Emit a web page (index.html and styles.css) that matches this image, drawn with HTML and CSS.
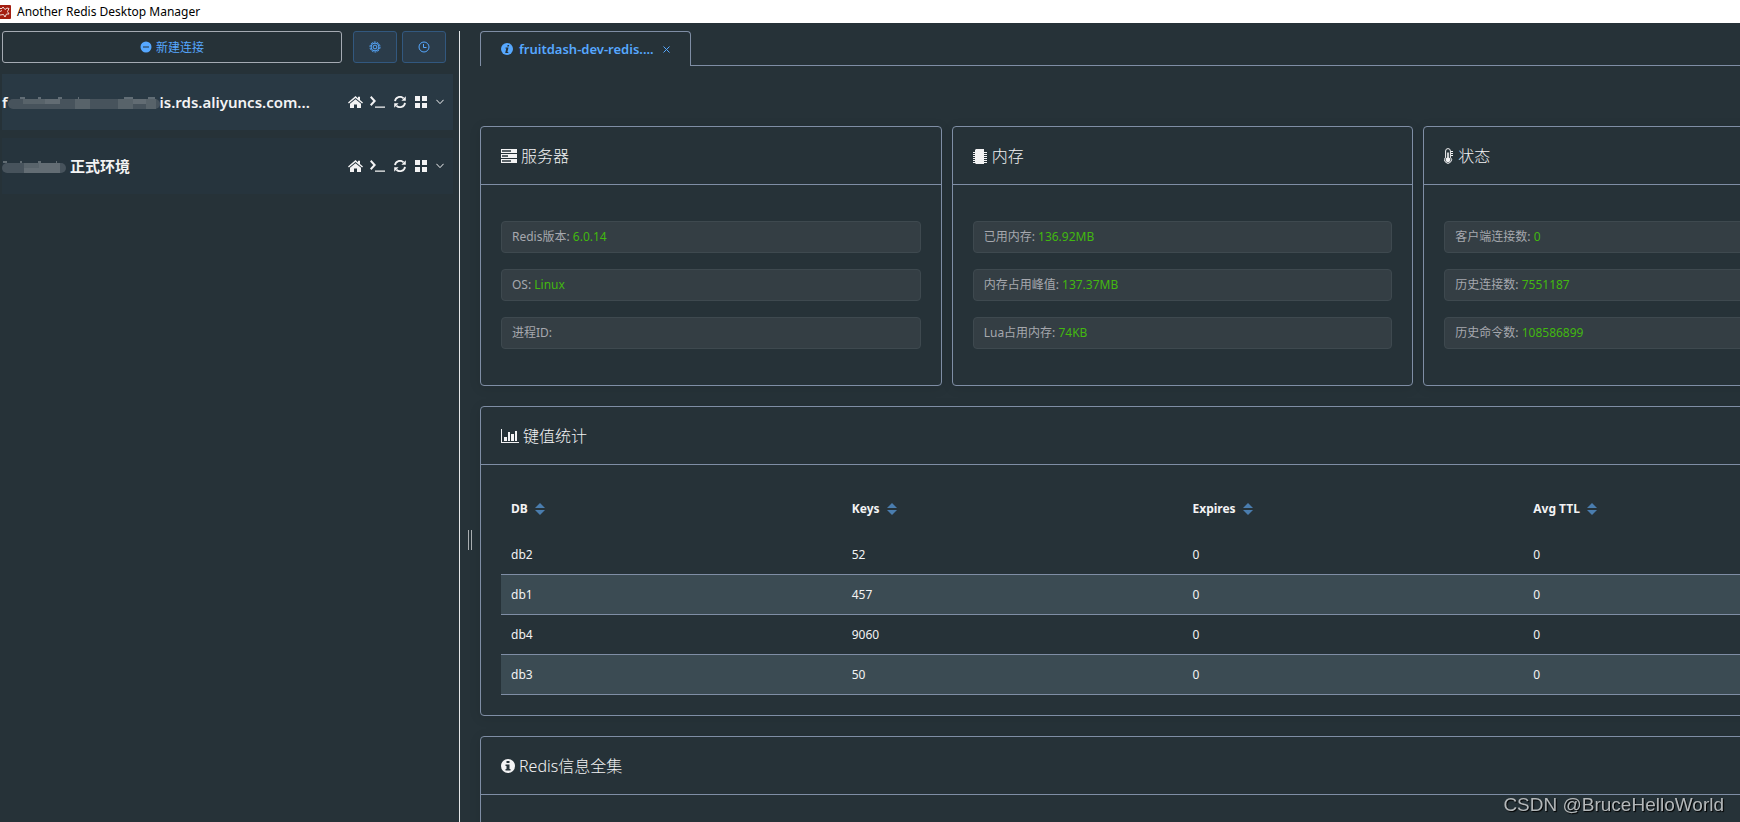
FILE: index.html
```
<!DOCTYPE html>
<html lang="zh-CN">

<head>
  <meta charset="UTF-8">
  <meta name="viewport" content="width=device-width, initial-scale=1.0">
  <title>Another Redis Desktop Manager</title>
  <link rel="stylesheet" href="styles.css">
</head>

<body>
  <!-- shared icons -->
  <svg class="sprite" aria-hidden="true">
    <symbol id="i-home" viewBox="0 0 15 13">
      <path d="M0 6.6 7.5 0l2.5 2.2V.8h2v3.1l3 2.7-.9 1L7.5 2 .9 7.6z" />
      <path d="M2 7.8 7.5 3.2 13 7.8V12H9V8.5H6V12H2z" />
    </symbol>
    <symbol id="i-terminal" viewBox="0 0 15 12">
      <path d="M1.4 0 6 5 1.4 10 0 8.6 3.2 5 0 1.4zM5 10.6h10v1.2H5z" />
    </symbol>
    <symbol id="i-refresh" viewBox="0 0 12 12">
      <path d="M1 5.2A5 5 0 0 1 9.6 2.4M11 6.8A5 5 0 0 1 2.4 9.6" fill="none" stroke="currentColor" stroke-width="1.8" />
      <path d="M11.8.3v4.4H7.4zM.2 11.7V7.3h4.4z" />
    </symbol>
    <symbol id="i-grid" viewBox="0 0 12 12">
      <path d="M0 0h5v5H0zM7 0h5v5H7zM0 7h5v5H0zM7 7h5v5H7z" />
    </symbol>
    <symbol id="i-arrow" viewBox="0 0 8 6">
      <path d="M.4.8 4 4.6 7.6.8" fill="none" stroke="currentColor" />
    </symbol>
  </svg>

  <header class="title-bar">
    <svg class="logo" width="11" height="14" viewBox="0 0 11 14">
      <rect x="-4" width="15" height="14" rx="1" fill="#a41e11" />
      <path d="M0 3.5h2l1-1.5 2 2.5L7 3l2 .5-1.5 3L9 9H6.500L5 12 3.500 9.500 0 10M0 6.500l2-1" fill="none" stroke="#f0dcd9" />
    </svg>
    Another Redis Desktop Manager
  </header>

  <div class="wrapper">
    <aside class="sidebar">
      <div class="toolbar">
        <button class="btn new-conn" type="button">
          <svg width="12" height="12" viewBox="0 0 12 12"><path fill-rule="evenodd" d="M6 .5a5.5 5.5 0 1 1 0 11a5.5 5.5 0 0 1 0-11zM3 5.4v1.2h6V5.4z" /></svg>
          新建连接
        </button>
        <button class="btn btn-icon" type="button" aria-label="设置">
          <svg class="line" width="12" height="12" viewBox="0 0 12 12"><circle cx="6" cy="6" r="5" stroke-dasharray="2 1.1" /><circle cx="6" cy="6" r="3.9" /><circle cx="6" cy="6" r="1.9" /></svg>
        </button>
        <button class="btn btn-icon" type="button" aria-label="日志">
          <svg class="line" width="12" height="12" viewBox="0 0 12 12"><circle cx="6" cy="6" r="5" /><path d="M5.5 3v3.5h3" /></svg>
        </button>
      </div>

      <ul class="connections">
        <li class="connection active">
          <span class="name">f<svg class="mask" width="152" height="13" viewBox="0 0 152 13">
              <path d="M12 1h5M30 1h3M50 1h4M70 1h1M116 1h9M140 1h7" stroke="#9aa2a7" />
              <rect y="2" width="152" height="10" rx="5" fill="#47535c" />
              <path d="M15 2h22v5H15zM67 2h15v10H67zM110 2h15v10h-15zM138 2h10v10h-10z" fill="#58636a" />
              <path d="M37 2h15v5H37zM125 2h13v5h-13z" fill="#626c73" />
            </svg>is.rds.aliyuncs.com...</span>
          <span class="tools">
            <svg class="home" width="15" height="13"><use href="#i-home" /></svg>
            <svg width="15" height="12"><use href="#i-terminal" /></svg>
            <svg width="12" height="12"><use href="#i-refresh" /></svg>
            <svg width="12" height="12"><use href="#i-grid" /></svg>
            <svg width="8" height="6"><use href="#i-arrow" /></svg>
          </span>
        </li>
        <li class="connection">
          <span class="name"><svg class="mask" width="64" height="13" viewBox="0 0 64 13">
              <path d="M1 1h4M18 1h2M36 1h3M54 1h1" stroke="#9aa2a7" />
              <rect y="2" width="64" height="10" rx="5" fill="#47535c" />
              <path d="M22 2h36v10H22z" fill="#636d74" />
              <path d="M22 2h15v5H22z" fill="#59646b" />
            </svg> 正式环境</span>
          <span class="tools">
            <svg class="home" width="15" height="13"><use href="#i-home" /></svg>
            <svg width="15" height="12"><use href="#i-terminal" /></svg>
            <svg width="12" height="12"><use href="#i-refresh" /></svg>
            <svg width="12" height="12"><use href="#i-grid" /></svg>
            <svg width="8" height="6"><use href="#i-arrow" /></svg>
          </span>
        </li>
      </ul>
    </aside>

    <div class="drag-bar"><i></i></div>

    <main class="content">
      <nav class="tabs">
        <a class="tab" href="#">
          <svg width="12" height="12" viewBox="0 0 12 12"><circle cx="6" cy="6" r="6" /><path d="M6.6 2h1.6l-.4 1.5H6.2zM4.6 4.4h2.9L6.4 9h.9v1H4.2L5.3 5.4h-.9z" fill="#263238" /></svg>
          fruitdash-dev-redis....
          <svg class="close" width="7" height="7" viewBox="0 0 7 7"><path d="M.5.5l6 6M6.5.5l-6 6" /></svg>
        </a>
      </nav>

      <div class="cards">
        <section class="card">
          <h2 class="card-header">
            <svg width="16" height="14" viewBox="0 0 16 14"><path fill-rule="evenodd" d="M0 0h16v4H0zM1 1.200v1.600h9V1.200zM0 5h16v4H0zM1 6.200v1.600h6V6.200zM0 10h16v4H0zM1 11.200v1.600h9v-1.600z" /></svg>
            服务器
          </h2>
          <div class="card-body">
            <p class="tag">Redis版本: <span>6.0.14</span></p>
            <p class="tag">OS: <span>Linux</span></p>
            <p class="tag">进程ID:</p>
          </div>
        </section>

        <section class="card">
          <h2 class="card-header">
            <svg width="15" height="15" viewBox="0 0 15 15"><path d="M3 0h8v15H3l-1-1V1z" /><path d="M0 3.5h14M0 5.5h14M0 7.5h14M0 9.5h14M0 11.5h14M0 13.5h14" stroke="currentColor" /></svg>
            内存
          </h2>
          <div class="card-body">
            <p class="tag">已用内存: <span>136.92MB</span></p>
            <p class="tag">内存占用峰值: <span>137.37MB</span></p>
            <p class="tag">Lua占用内存: <span>74KB</span></p>
          </div>
        </section>

        <section class="card">
          <h2 class="card-header">
            <svg width="10" height="16" viewBox="0 0 10 16"><path d="M1.6 9.2V3a2.4 2.4 0 0 1 4.8 0v6.2a3.5 3.5 0 1 1-4.8 0z" fill="none" stroke="currentColor" /><path d="M3.2 4.5h1.6v5a2.4 2.4 0 1 1-1.6 0z" /><path d="M7 3.5h2M7 5.5h2M7 7.5h2" stroke="currentColor" /></svg>
            状态
          </h2>
          <div class="card-body">
            <p class="tag">客户端连接数: <span>0</span></p>
            <p class="tag">历史连接数: <span>7551187</span></p>
            <p class="tag">历史命令数: <span>108586899</span></p>
          </div>
        </section>
      </div>

      <section class="card">
        <h2 class="card-header">
          <svg width="18" height="14" viewBox="0 0 18 14"><path d="M0 0h1v13h17v1H0zM3 8h3v4H3zM7 3h2v9H7zM10 5h3v7h-3zM14 2h2v10h-2z" /></svg>
          键值统计
        </h2>
        <div class="card-body">
          <table class="keyspace">
            <thead>
              <tr>
                <th>DB <i class="sort"></i></th>
                <th>Keys <i class="sort"></i></th>
                <th>Expires <i class="sort"></i></th>
                <th>Avg TTL <i class="sort"></i></th>
              </tr>
            </thead>
            <tbody>
              <tr><td>db2</td><td>52</td><td>0</td><td>0</td></tr>
              <tr><td>db1</td><td>457</td><td>0</td><td>0</td></tr>
              <tr><td>db4</td><td>9060</td><td>0</td><td>0</td></tr>
              <tr><td>db3</td><td>50</td><td>0</td><td>0</td></tr>
            </tbody>
          </table>
        </div>
      </section>

      <section class="card">
        <h2 class="card-header">
          <svg width="14" height="14" viewBox="0 0 14 14"><circle cx="7" cy="7" r="7" /><path d="M5.5 2h3v2h-3zM4.5 5.500h4V10h1v1.500h-5V10h1V7h-1z" fill="#263238" /></svg>
          Redis信息全集
        </h2>
        <div class="card-body"></div>
      </section>
    </main>
  </div>

  <div class="watermark">CSDN @BruceHelloWorld</div>
</body>

</html>
```

FILE: styles.css
```
* {
  margin: 0;
  padding: 0;
  box-sizing: border-box;
}

body {
  height: 100vh;
  display: flex;
  flex-direction: column;
  overflow: hidden;
  background-color: #263238;
  color: #f3f3f4;
  font-family: "Noto Sans", "Noto Sans CJK SC", sans-serif;
  font-size: 12px;
}

svg {
  fill: currentColor;
  flex-shrink: 0;
}

.sprite {
  position: absolute;
  width: 0;
  height: 0;
}

.title-bar {
  height: 23px;
  flex-shrink: 0;
  display: flex;
  align-items: center;
  gap: 6px;
  background-color: white;
  color: black;
}

.wrapper {
  flex: 1;
  min-height: 0;
  display: flex;
  padding-top: 8px;
  overflow: hidden;
}

/* sidebar */
.sidebar {
  width: 460px;
  flex-shrink: 0;
  padding: 0 6px 0 2px;
  border-right: 1px solid #e4e7e8;
}

.toolbar {
  display: flex;
  gap: 5px;
  padding-right: 7px;
}

.btn {
  height: 32px;
  display: flex;
  justify-content: center;
  align-items: center;
  gap: 4px;
  border: 1px solid #32587f;
  border-radius: 3px;
  background-color: #2b3c4a;
  color: #56a8ff;
  font: inherit;
  cursor: pointer;
}

.btn-icon {
  width: 44px;
}

.new-conn {
  flex: 1;
  margin-right: 6px;
  border-color: #a5abb3;
  background-color: transparent;
}

.line {
  fill: none;
  stroke: currentColor;
}

.connections {
  list-style: none;
  margin-top: 11px;
}

.connection {
  height: 56px;
  margin-bottom: 8px;
  display: flex;
  justify-content: space-between;
  align-items: center;
  padding-right: 9px;
  background-color: #26343d;
}

.connection.active {
  background-color: #293944;
}

.name {
  font-size: 15px;
  font-weight: 600;
  line-height: 20px;
  white-space: nowrap;
}

.mask {
  vertical-align: -2px;
}

.tools {
  display: flex;
  align-items: center;
  gap: 9px;
}

.home {
  margin-right: -2px;
}

.drag-bar {
  width: 20px;
  flex-shrink: 0;
  display: flex;
  align-items: center;
  justify-content: center;
  padding-top: 226px;
}

.drag-bar i {
  width: 4px;
  height: 20px;
  border: 1px solid #a9aeb1;
  border-width: 0 1px;
}

/* the content pane runs past the right edge of the window */
.content {
  flex: 1;
  min-width: 0;
  margin-right: -145px;
}

.tabs {
  display: flex;
  margin-bottom: 60px;
}

.tabs::after {
  content: "";
  flex: 1;
  border-bottom: 1px solid #7f8ea5;
}

.tab {
  height: 35px;
  display: flex;
  align-items: center;
  gap: 6px;
  padding: 0 20px;
  border: 1px solid #7f8ea5;
  border-bottom: none;
  border-radius: 4px 4px 0 0;
  color: #56a8ff;
  font-size: 13px;
  font-weight: 600;
  text-decoration: none;
}

.close {
  margin-left: 3px;
  stroke: currentColor;
}

.cards {
  display: flex;
  gap: 10px;
}

.cards .card {
  flex: 1;
}

.card {
  margin-bottom: 20px;
  border: 1px solid #7f8ea5;
  border-radius: 4px;
  box-shadow: 0 2px 12px rgba(0, 0, 0, 0.1);
}

.card-header {
  height: 58px;
  display: flex;
  align-items: center;
  gap: 4px;
  padding: 1px 20px 0;
  border-bottom: 1px solid #7f8ea5;
  font-size: 16px;
  font-weight: 300;
  line-height: 22px;
}

.card-body {
  padding: 20px;
}

.tag {
  height: 32px;
  margin: 16px 0;
  padding: 0 10px;
  border: 1px solid #3e494f;
  border-radius: 4px;
  background-color: #343e44;
  color: #a6a8ae;
  line-height: 30px;
}

.tag span {
  color: #42b80f;
}

.keyspace {
  width: 100%;
  table-layout: fixed;
  border-spacing: 0;
  text-align: left;
}

.keyspace th {
  height: 50px;
  padding: 0 10px 4px;
}

.keyspace td {
  height: 40px;
  padding: 0 10px;
  border-bottom: 1px solid #7f8ea5;
}

.keyspace tbody tr:nth-child(even) {
  background-color: #3b4b53;
}

.sort {
  display: inline-flex;
  flex-direction: column;
  gap: 2px;
  margin-left: 4px;
  vertical-align: middle;
}

.sort::before,
.sort::after {
  content: "";
  border: 5px solid transparent;
}

.sort::before {
  border-top: none;
  border-bottom-color: #4a7dae;
}

.sort::after {
  border-bottom: none;
  border-top-color: #4a7dae;
}

.watermark {
  position: fixed;
  right: 16px;
  bottom: 6px;
  color: #b4b8ba;
  font-family: "Liberation Sans", Arial, sans-serif;
  font-size: 19px;
  text-shadow: 1px 1px 1px black;
}
```
